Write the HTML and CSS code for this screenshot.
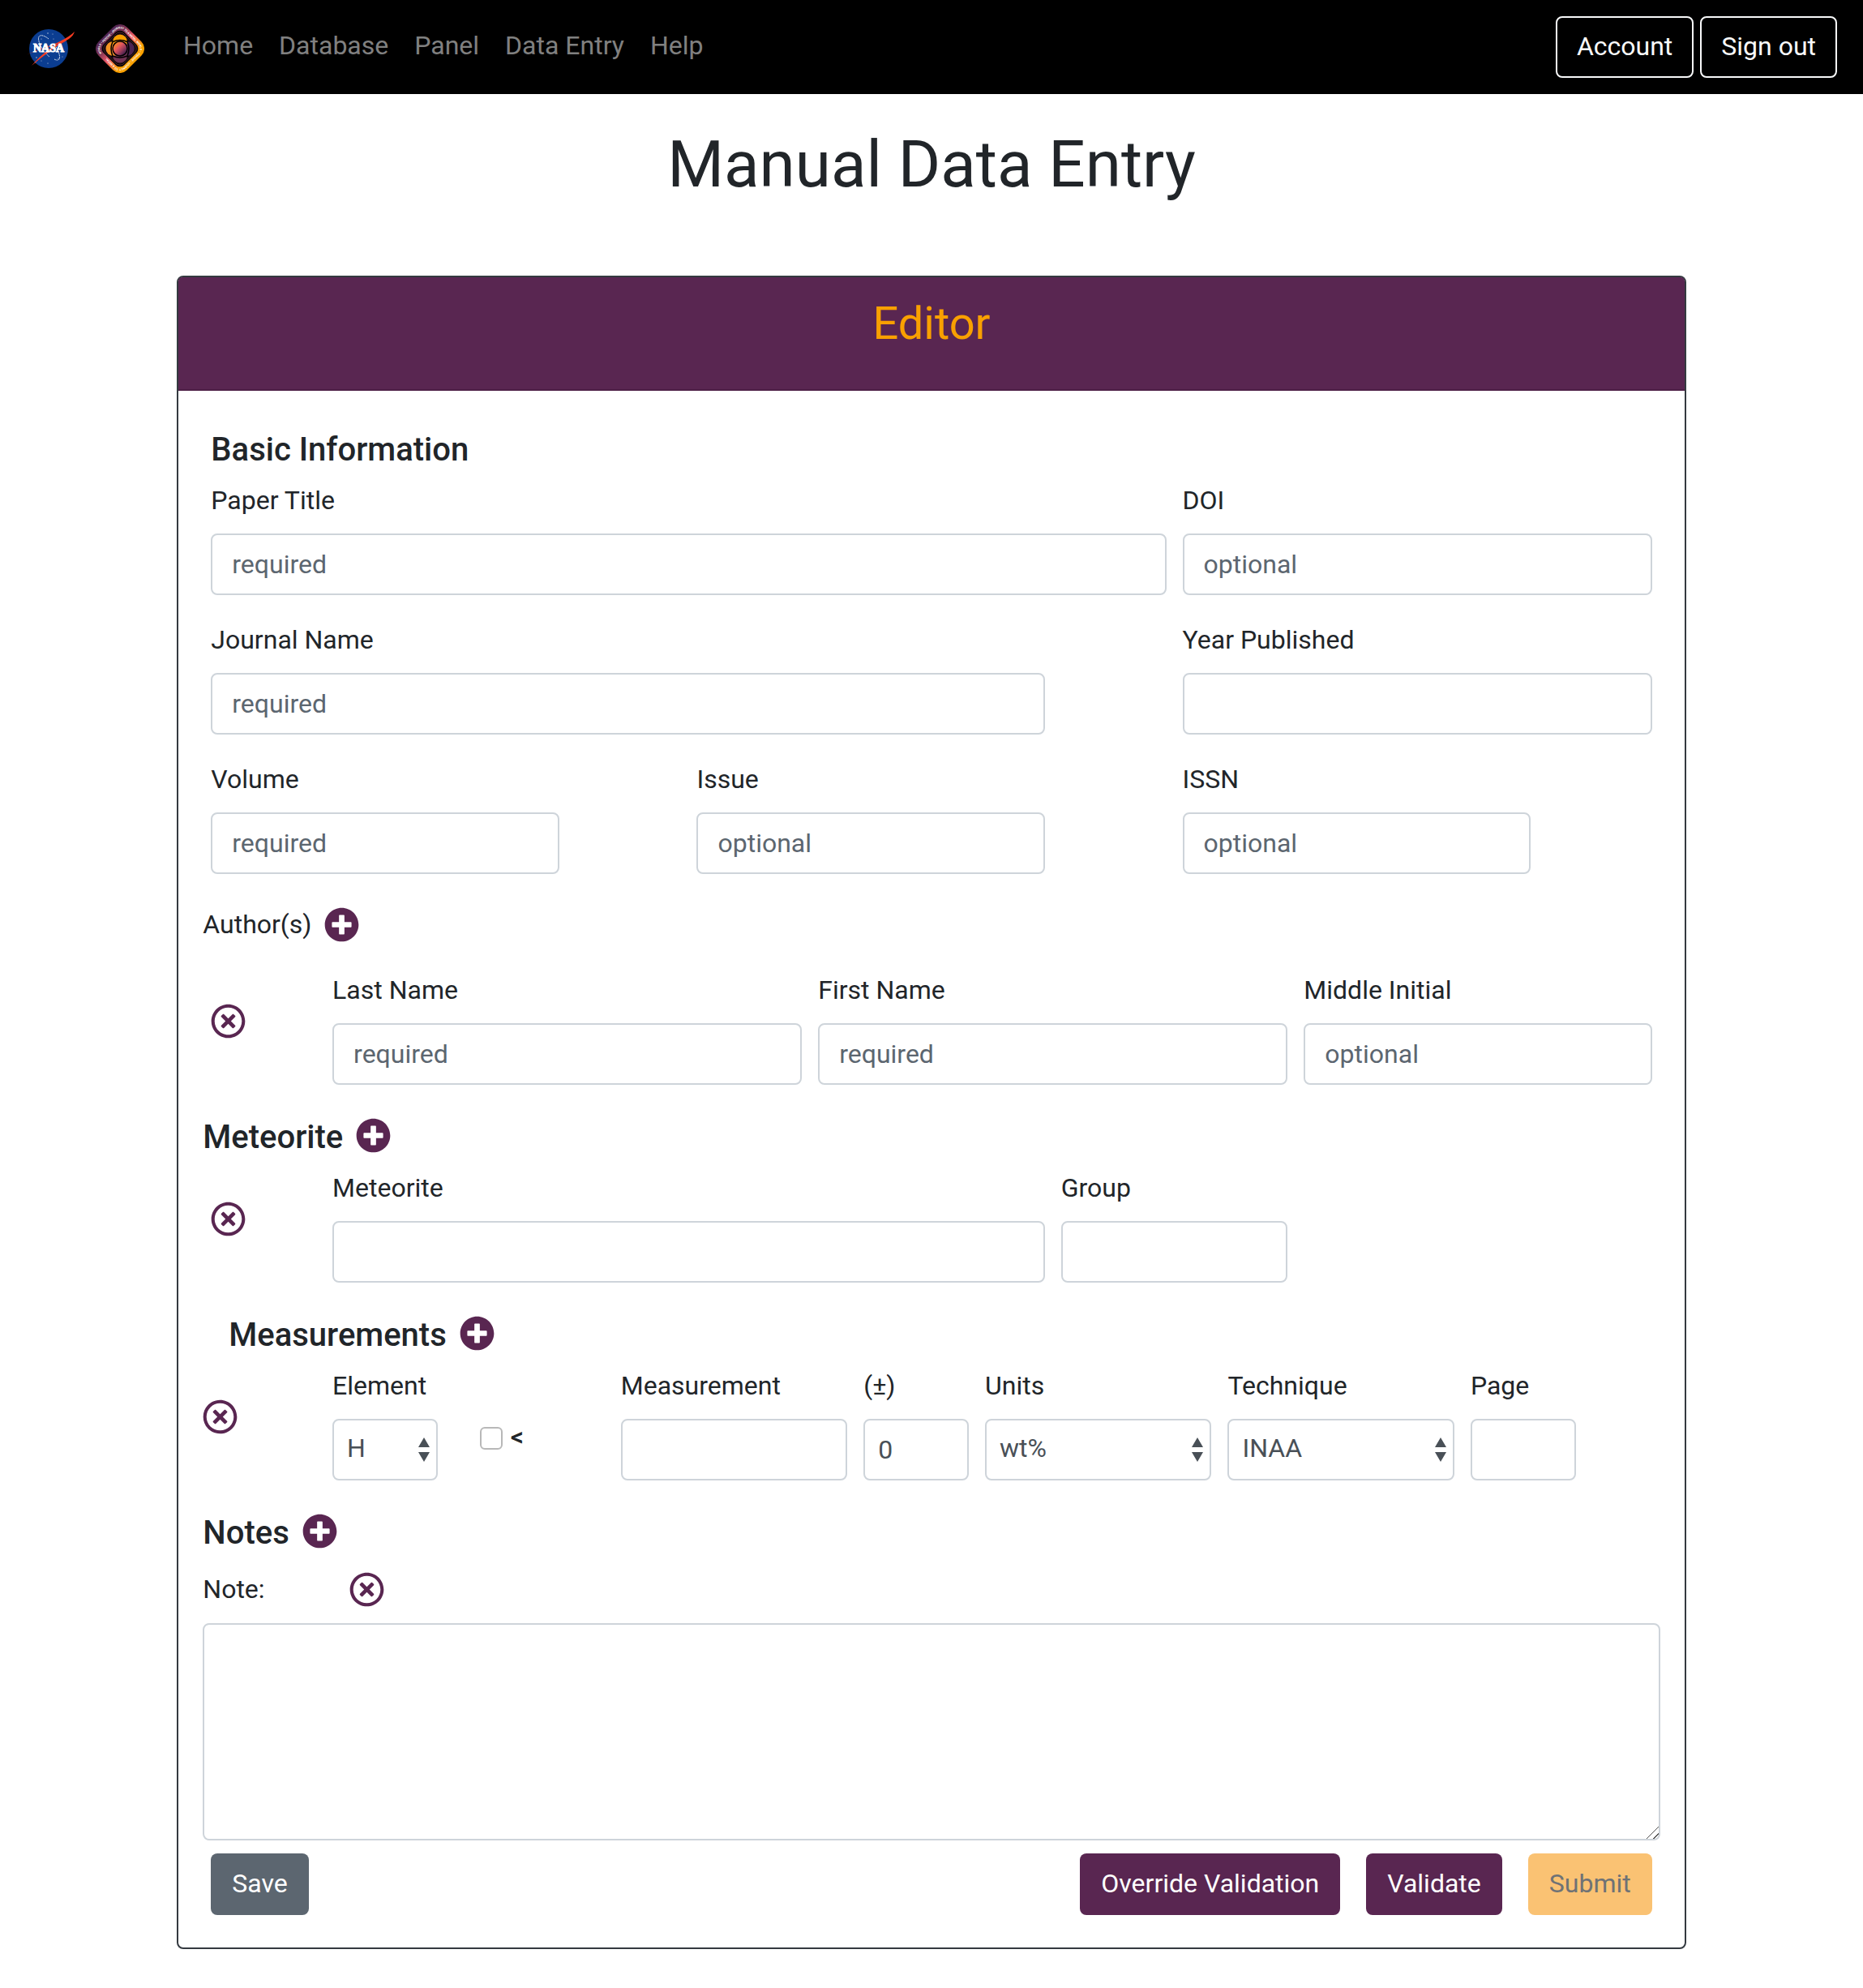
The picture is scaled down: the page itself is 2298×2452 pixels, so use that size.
FILE: index.html
```html
<!DOCTYPE html>
<html lang="en">
<head>
<meta charset="utf-8">
<meta name="viewport" content="width=device-width, initial-scale=1">
<title>Manual Data Entry</title>
<link rel="stylesheet" href="styles.css">
</head>
<body>
<svg class="sprite" aria-hidden="true">
  <symbol id="icon-plus" viewBox="0 0 512 512"><path d="M256 8C119 8 8 119 8 256s111 248 248 248 248-111 248-248S393 8 256 8zm144 276c0 6.600-5.400 12-12 12h-92v92c0 6.600-5.400 12-12 12h-56c-6.600 0-12-5.400-12-12v-92h-92c-6.600 0-12-5.400-12-12v-56c0-6.600 5.400-12 12-12h92v-92c0-6.600 5.400-12 12-12h56c6.600 0 12 5.400 12 12v92h92c6.600 0 12 5.400 12 12v56z"/></symbol>
  <symbol id="icon-times" viewBox="0 0 512 512"><path d="M256 8C119 8 8 119 8 256s111 248 248 248 248-111 248-248S393 8 256 8zm0 448c-110.500 0-200-89.500-200-200S145.500 56 256 56s200 89.500 200 200-89.500 200-200 200zm101.800-262.200L295.600 256l62.200 62.200c4.700 4.700 4.700 12.300 0 17l-22.600 22.600c-4.700 4.700-12.300 4.700-17 0L256 295.600l-62.200 62.200c-4.700 4.700-12.300 4.700-17 0l-22.600-22.600c-4.700-4.700-4.700-12.300 0-17l62.200-62.200-62.200-62.200c-4.700-4.700-4.700-12.300 0-17l22.600-22.600c4.700-4.700 12.300-4.700 17 0l62.200 62.200 62.200-62.200c4.700-4.700 12.300-4.700 17 0l22.600 22.600c4.700 4.700 4.700 12.300 0 17z"/></symbol>
  <symbol id="icon-sort" viewBox="0 0 16 30"><path d="M8 0L1 12h14zM8 30L1 18h14z"/></symbol>
</svg>

<header class="navbar">
  <a class="brand" href="#" aria-label="Home page">
    <svg class="logo" viewBox="0 0 60 60" aria-hidden="true">
      <circle cx="28" cy="30" r="24" fill="#0b3d91"/>
      <g fill="#fff" opacity=".8">
        <circle cx="27" cy="11" r=".7"/><circle cx="33" cy="12" r=".5"/><circle cx="19" cy="18" r=".6"/><circle cx="34" cy="18" r=".5"/><circle cx="40" cy="42" r=".6"/><circle cx="13" cy="41" r=".7"/><circle cx="19" cy="45" r=".5"/><circle cx="27" cy="48" r=".6"/><circle cx="12" cy="47" r=".5"/><circle cx="45" cy="40" r=".5"/>
      </g>
      <path d="M28 18C22 13 16 12 15.500 17C15 23 22 35 29 40M35 43C38 45 41 44 41.500 42C42 38 40 32 36 26" fill="none" stroke="#fff" stroke-width=".8" stroke-dasharray="2 .6"/>
      <path d="M0 38C16 30 30 27 42 21C50 17 56 13 60 9C58 16 50 21 40 24C28 28 16 31 0 38Z" fill="#fc3d21"/>
      <path d="M50 20C34 25 20 36 7 51C20 40 34 29 50 20Z" fill="#fc3d21"/>
      <text class="logo-word" x="28" y="34" text-anchor="middle">NASA</text>
    </svg>
    <svg class="logo" viewBox="0 0 120 120" aria-hidden="true">
      <defs>
        <linearGradient id="ring" gradientUnits="userSpaceOnUse" x1="14" y1="14" x2="106" y2="106"><stop offset=".1" stop-color="#4b2452"/><stop offset=".3" stop-color="#7e3556"/><stop offset=".5" stop-color="#ef5966"/><stop offset=".75" stop-color="#f9a000"/></linearGradient>
        <linearGradient id="core" x1="0" y1="0" x2="1" y2="1"><stop offset=".25" stop-color="#f47c33"/><stop offset=".42" stop-color="#e2575c"/><stop offset=".58" stop-color="#a53f5b"/><stop offset=".75" stop-color="#592651"/></linearGradient>
        <path id="ring-path" d="M15.300 71.300A16 16 0 0 1 15.300 48.700L48.700 15.300A16 16 0 0 1 71.300 15.300L104.700 48.700A16 16 0 0 1 104.700 71.300L71.300 104.700A16 16 0 0 1 48.700 104.700Z"/>
        <path id="shell" d="M7 77A24 24 0 0 1 7 43L43 7A24 24 0 0 1 77 7L113 43A24 24 0 0 1 113 77L77 113A24 24 0 0 1 43 113Z"/>
      </defs>
      <use href="#shell" fill="url(#ring)"/>
      <g transform="rotate(45 60 60)">
        <rect x="24" y="24" width="72" height="72" rx="15" fill="#000"/>
        <rect x="27" y="27" width="66" height="66" rx="15" fill="none" stroke="#a05060" stroke-width="1"/>
        <rect x="30" y="30" width="60" height="60" rx="15" fill="none" stroke="#693049" stroke-width="1"/>
      </g>
      <circle cx="77" cy="60" r="18" fill="#4b2452"/><circle cx="60" cy="77" r="18" fill="#713354"/>
      <circle cx="43" cy="60" r="18" fill="#f59422"/><circle cx="60" cy="43" r="18" fill="#f9a000"/>
      <circle cx="60" cy="60" r="20" fill="url(#core)"/>
      <circle cx="60" cy="60" r="18" fill="none" stroke="#000" stroke-width="3"/>
      <path d="M42 43Q60 35 78 43Q86 60 78 78Q60 86 42 78Q34 60 42 43Z" fill="none" stroke="#000" stroke-width="3"/>
      <text class="ring-word"><textPath href="#ring-path">WORLD • PSYCHE • JOURNEY TO A METAL WORLD • PSYCHE • JOURNEY TO A METAL</textPath></text>
    </svg>
  </a>
  <nav class="nav">
    <a href="#">Home</a>
    <a href="#">Database</a>
    <a href="#">Panel</a>
    <a href="#">Data Entry</a>
    <a href="#">Help</a>
  </nav>
  <div class="nav-actions">
    <button class="btn btn-outline" type="button">Account</button>
    <button class="btn btn-outline" type="button">Sign out</button>
  </div>
</header>

<main>
  <h1 class="page-title">Manual Data Entry</h1>
  <form class="card">
    <div class="card-header"><h2>Editor</h2></div>
    <div class="card-body">

      <div class="intro"><h3>Basic Information</h3></div>
      <div class="row">
        <div class="field span-8"><label for="title">Paper Title</label><input id="title" type="text" placeholder="required"></div>
        <div class="field span-4"><label for="doi">DOI</label><input id="doi" type="text" placeholder="optional"></div>
      </div>
      <div class="row">
        <div class="field span-7"><label for="journal">Journal Name</label><input id="journal" type="text" placeholder="required"></div>
        <div class="field span-4 from-9"><label for="year">Year Published</label><input id="year" type="text"></div>
      </div>
      <div class="row">
        <div class="field span-3"><label for="volume">Volume</label><input id="volume" type="text" placeholder="required"></div>
        <div class="field span-3 from-5"><label for="issue">Issue</label><input id="issue" type="text" placeholder="optional"></div>
        <div class="field span-3 from-9"><label for="issn">ISSN</label><input id="issn" type="text" placeholder="optional"></div>
      </div>

      <div class="line-head line-head-authors">
        <span>Author(s)</span>
        <button class="icon-btn" type="button" aria-label="Add author"><svg class="icon"><use href="#icon-plus"/></svg></button>
      </div>
      <div class="row">
        <button class="icon-btn row-delete" type="button" aria-label="Remove author"><svg class="icon"><use href="#icon-times"/></svg></button>
        <div class="field span-4"><label for="last">Last Name</label><input id="last" type="text" placeholder="required"></div>
        <div class="field span-4"><label for="first">First Name</label><input id="first" type="text" placeholder="required"></div>
        <div class="field span-3"><label for="middle">Middle Initial</label><input id="middle" type="text" placeholder="optional"></div>
      </div>

      <div class="section-head">
        <h3>Meteorite</h3>
        <button class="icon-btn" type="button" aria-label="Add meteorite"><svg class="icon"><use href="#icon-plus"/></svg></button>
      </div>
      <div class="row">
        <button class="icon-btn row-delete" type="button" aria-label="Remove meteorite"><svg class="icon"><use href="#icon-times"/></svg></button>
        <div class="field span-6"><label for="meteorite">Meteorite</label><input id="meteorite" type="text"></div>
        <div class="field span-2"><label for="group">Group</label><input id="group" type="text"></div>
      </div>

      <div class="section-head section-head-nested">
        <h3>Measurements</h3>
        <button class="icon-btn" type="button" aria-label="Add measurement"><svg class="icon"><use href="#icon-plus"/></svg></button>
      </div>
      <div class="row row-measurement">
        <button class="icon-btn row-delete row-delete-outer" type="button" aria-label="Remove measurement"><svg class="icon"><use href="#icon-times"/></svg></button>
        <div class="field"><label for="element">Element</label>
          <div class="select"><select id="element"><option>H</option><option>He</option><option>Li</option></select><svg class="select-arrows" aria-hidden="true"><use href="#icon-sort"/></svg></div></div>
        <div class="check"><input id="less" type="checkbox"><label for="less">&lt;</label></div>
        <div class="field span-2"><label for="value">Measurement</label><input id="value" type="text"></div>
        <div class="field"><label for="deviation">(±)</label><input id="deviation" class="input-tight" type="text" value="0"></div>
        <div class="field span-2"><label for="units">Units</label>
          <div class="select"><select id="units"><option>wt%</option><option>ppm</option></select><svg class="select-arrows" aria-hidden="true"><use href="#icon-sort"/></svg></div></div>
        <div class="field span-2"><label for="technique">Technique</label>
          <div class="select"><select id="technique"><option>INAA</option><option>RNAA</option></select><svg class="select-arrows" aria-hidden="true"><use href="#icon-sort"/></svg></div></div>
        <div class="field"><label for="page">Page</label><input id="page" class="input-tight" type="text"></div>
      </div>

      <div class="section-head">
        <h3>Notes</h3>
        <button class="icon-btn" type="button" aria-label="Add note"><svg class="icon"><use href="#icon-plus"/></svg></button>
      </div>
      <div class="line-head line-head-note">
        <label for="note">Note:</label>
        <button class="icon-btn" type="button" aria-label="Remove note"><svg class="icon"><use href="#icon-times"/></svg></button>
      </div>
      <textarea id="note" rows="5"></textarea>

      <div class="actions">
        <button class="btn btn-save" type="button">Save</button>
        <button class="btn btn-primary" type="button">Override Validation</button>
        <button class="btn btn-primary" type="button">Validate</button>
        <button class="btn btn-submit" type="submit" disabled>Submit</button>
      </div>
    </div>
  </form>
</main>
</body>
</html>
```
FILE: styles.css
```css
:root {
  --purple: #592651;
  --orange: #f9a000;
  --text: #212529;
  --field-text: #495057;
  --slate: #5c6670;
  --border: #ced4da;
  --dark: #343a40;
}

*, *::before, *::after { box-sizing: border-box; }

body {
  margin: 0;
  background: #fff;
  color: var(--text);
  font: 400 32px/48px Roboto, "Liberation Sans", sans-serif;
}

h1, h2, h3 { margin: 0; font-weight: 500; }
h3 { font-size: 40px; line-height: 48px; }

button, input, select, textarea { margin: 0; font: inherit; color: inherit; }

.sprite { display: none; }

/* Top bar */
.navbar {
  display: flex;
  align-items: center;
  padding: 20px 32px;
  background: #000;
}
.brand { display: flex; gap: 26px; margin-right: 32px; padding-top: 4px; }
.logo { display: block; width: 60px; height: 60px; }
.logo-word { font: 700 14px "Liberation Serif", serif; fill: #fff; stroke: #fff; stroke-width: 1px; }
.ring-word { font: 700 7px Roboto, sans-serif; fill: #fff; }
.nav { display: flex; }
.nav a { padding: 0 16px 4px; color: #808080; text-decoration: none; }
.nav-actions { display: flex; gap: 8px; margin-left: auto; }

.btn {
  padding: 11px 24px 13px;
  border: 2px solid transparent;
  border-radius: 8px;
  line-height: 48px;
  color: #fff;
}
.btn-outline { background: transparent; border-color: #f8f9fa; color: #f8f9fa; }
.btn-save { margin-right: auto; background: var(--slate); }
.btn-primary { background: var(--purple); }
.btn-submit { background: #fac273; color: #6f7275; }

.page-title {
  margin: 39px 0 89px;
  font-size: 80px;
  font-weight: 400;
  line-height: 96px;
  text-align: center;
}

/* Editor card */
.card {
  width: 81%;
  margin: 0 auto 48px;
  border: 2px solid var(--dark);
  border-radius: 8px;
}
.card-header {
  padding: 24px 40px 47px;
  border-bottom: 2px solid #4d1f46;
  border-radius: 5px 5px 0 0;
  background: var(--purple);
  color: var(--orange);
  text-align: center;
}
.card-header h2 { font-size: 56px; font-weight: 400; line-height: 67px; }
.card-body { padding: 48px 30px 40px; }

.intro { padding: 1px 10px 15px; }

.row {
  display: grid;
  grid-template-columns: repeat(12, minmax(0, 1fr));
  column-gap: 20px;
  padding: 0 10px 32px;
}
.row-measurement {
  grid-template-columns: repeat(2, minmax(0, 1fr)) 186px repeat(8, minmax(0, 1fr)) 74px;
}
.span-2 { grid-column-end: span 2; }
.span-3 { grid-column-end: span 3; }
.span-4 { grid-column-end: span 4; }
.span-6 { grid-column-end: span 6; }
.span-7 { grid-column-end: span 7; }
.span-8 { grid-column-end: span 8; }
.from-5 { grid-column-start: 5; }
.from-9 { grid-column-start: 9; }

.field { display: flex; flex-direction: column; gap: 18px; }
.field label { line-height: 46px; }

input[type="text"], select, textarea {
  display: block;
  width: 100%;
  padding: 12px 24px;
  border: 2px solid var(--border);
  border-radius: 8px;
  background: #fff;
  color: var(--field-text);
}
input[type="text"], select { height: 76px; }
input[type="text"].input-tight { padding: 12px 16px; }
::placeholder { color: var(--slate); opacity: 1; }

/* Two-stroke resize grip */
textarea { resize: vertical; }
textarea::-webkit-resizer {
  background: linear-gradient(135deg, transparent 47%, #555 47%, #555 53%, transparent 53%, transparent 76%, #555 76%, #555 82%, transparent 82%);
}

.select { position: relative; }
.select select { appearance: none; padding: 10px 32px 14px 16px; }
.select-arrows {
  position: absolute;
  top: 23px;
  right: 9px;
  width: 16px;
  height: 30px;
  fill: var(--field-text);
  pointer-events: none;
}

.check { display: flex; gap: 10px; padding: 74px 0 0 32px; font-weight: 500; line-height: 24px; }
.check input {
  appearance: none;
  width: 28px;
  height: 28px;
  border: 2px solid #b8b8b8;
  border-radius: 6px;
  background: #fff;
}

/* Headings with an add or remove button */
.section-head { display: flex; align-items: flex-start; gap: 16px; padding: 9px 0 15px; }
.section-head-nested { padding-left: 32px; }
.line-head { display: flex; align-items: center; gap: 16px; height: 60px; }
.line-head-authors { margin-bottom: 28px; }
.line-head-note { margin-bottom: 12px; }
.line-head-note label { width: 165px; }

.icon-btn {
  display: block;
  padding: 0;
  border: 0;
  background: none;
  color: var(--purple);
}
.icon { display: block; width: 43px; height: 43px; fill: currentColor; }
.row-delete { align-self: start; justify-self: start; margin-top: 40px; }
.row-delete-outer { margin-left: -10px; }

.actions { display: flex; gap: 32px; padding: 16px 10px 0; }
```
